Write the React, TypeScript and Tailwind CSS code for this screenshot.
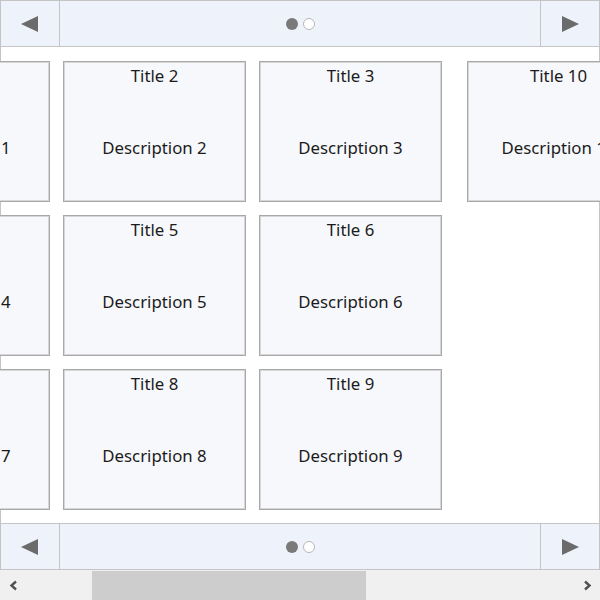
import React from 'react';

const pages = [
  [1, 2, 3, 4, 5, 6, 7, 8, 9],
  [10],
];

function Triangle({ dir }: { dir: 'left' | 'right' }) {
  return (
    <svg width="18" height="18" viewBox="0 0 18 18">
      {dir === 'left' ? (
        <polygon points="0,9 17,1 17,17" fill="#6b6b6b" />
      ) : (
        <polygon points="18,9 1,1 1,17" fill="#6b6b6b" />
      )}
    </svg>
  );
}

function Nav() {
  return (
    <div className="h-[47px] shrink-0 flex border border-[#c4c4c4] bg-[#eef2fa]">
      <button className="w-[59px] flex items-center justify-center border-r border-[#c4c4c4]">
        <Triangle dir="left" />
      </button>
      <div className="flex-1 flex items-center justify-center gap-[5px]">
        <span className="w-[12px] h-[12px] rounded-full bg-[#7a7a7a]" />
        <span className="w-[12px] h-[12px] rounded-full bg-white border border-[#b8b8b8]" />
      </div>
      <button className="w-[59px] flex items-center justify-center border-l border-[#c4c4c4]">
        <Triangle dir="right" />
      </button>
    </div>
  );
}

function Card({ n }: { n: number }) {
  return (
    <div className="h-[141px] flex flex-col items-center bg-[#f7f8fc] border border-[#a9a9a9] shadow-[inset_0_0_0_1px_#d6d6d6] text-[#1b1b1b] text-[16.8px] leading-[22px]">
      <div className="pt-[3px] whitespace-nowrap">Title {n}</div>
      <div className="mt-[50px] whitespace-nowrap">Description {n}</div>
    </div>
  );
}

export default function App() {
  return (
    <div className="w-[600px] h-[600px] flex flex-col bg-white overflow-hidden" style={{ fontFamily: '"Noto Sans", "Open Sans", sans-serif' }}>
      <Nav />
      <div className="flex-1 border-x border-[#c4c4c4]">
        <div className="-mx-px h-full overflow-hidden">
          <div className="flex ml-[-133px] pt-[14px]">
            {pages.map((cards, i) => (
              <div key={i} className="w-[600px] shrink-0">
                <div className="grid grid-cols-[repeat(3,183px)] gap-[13px]">
                  {cards.map(n => (
                    <Card key={n} n={n} />
                  ))}
                </div>
              </div>
            ))}
          </div>
        </div>
      </div>
      <Nav />
      <div className="h-[30px] shrink-0 flex items-stretch bg-[#f0f0f0] pt-[1px]">
        <div className="w-[26px] flex items-center justify-center">
          <svg width="9" height="11" viewBox="0 0 9 11">
            <path d="M7 1.5 L2.5 5.5 L7 9.5" stroke="#505050" strokeWidth="2.4" fill="none" />
          </svg>
        </div>
        <div className="flex-1 flex">
          <div className="ml-[66px] w-[274px] bg-[#cdcdcd]" />
        </div>
        <div className="w-[26px] flex items-center justify-center">
          <svg width="9" height="11" viewBox="0 0 9 11">
            <path d="M2 1.5 L6.5 5.5 L2 9.5" stroke="#505050" strokeWidth="2.4" fill="none" />
          </svg>
        </div>
      </div>
    </div>
  );
}
